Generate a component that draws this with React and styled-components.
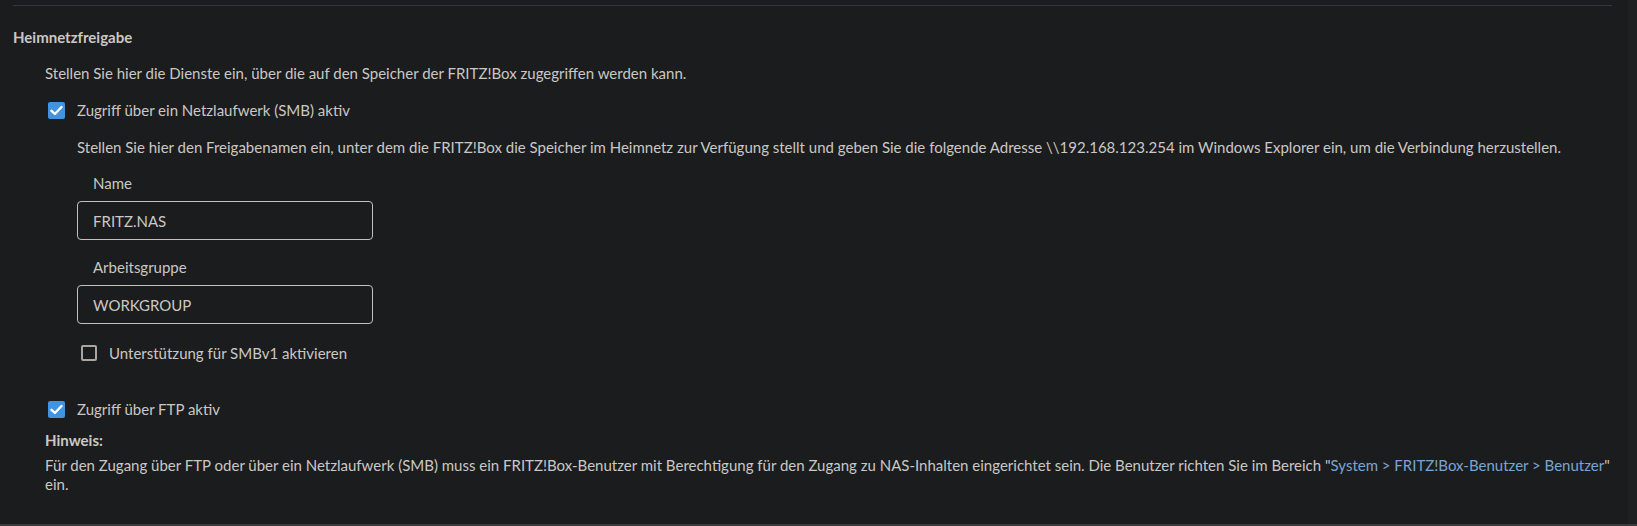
import React from "react";
import styled, { createGlobalStyle } from "styled-components";

const GlobalStyle = createGlobalStyle`
  html, body { margin: 0; padding: 0; background: #1b1c1e; }
  body {
    font-family: Lato, "Noto Sans", sans-serif;
    font-size: 15px;
    color: #cac8c4;
    -webkit-font-smoothing: antialiased;
  }
  * { box-sizing: border-box; }
`;

const Page = styled.div`
  display: flex;
  height: 526px;
  border-bottom: 2px solid #3a3b3d;
  background: #1b1c1e;
  overflow: hidden;
`;

const Main = styled.main`
  flex: 1;
  padding: 0 16px 0 13px;
`;

const Scrollbar = styled.div`
  width: 9px;
  background: #1f2022;
`;

const Rule = styled.hr`
  margin: 5px 0 0;
  border: 0;
  height: 1px;
  background: #35363a;
`;

const Heading = styled.h2`
  margin: 21px 0 0;
  font-size: 15px;
  line-height: 20px;
  font-weight: 700;
  color: #cac8c4;
`;

const Section = styled.div`
  padding-left: 32px;
`;

const Text = styled.p`
  margin: ${(p) => p.$mt || 0}px 0 0;
  line-height: 20px;
`;

const CheckRow = styled.label`
  display: flex;
  align-items: center;
  height: 20px;
  margin-top: ${(p) => p.$mt || 0}px;
  padding-left: ${(p) => p.$pl || 3}px;
  gap: ${(p) => p.$gap || 12}px;
  line-height: 20px;
  cursor: pointer;
`;

const Box = styled.span`
  flex: none;
  display: inline-flex;
  align-items: center;
  justify-content: center;
  width: ${(p) => (p.$checked ? 17 : 16)}px;
  height: ${(p) => (p.$checked ? 17 : 16)}px;
  border-radius: 2px;
  background: ${(p) => (p.$checked ? "#4293e0" : "transparent")};
  border: ${(p) => (p.$checked ? "none" : "2px solid #a9a6a1")};
`;

const SubSection = styled.div`
  padding-left: 32px;
`;

const FieldLabel = styled.div`
  margin-top: ${(p) => p.$mt || 0}px;
  padding-left: 16px;
  line-height: 20px;
`;

const Input = styled.input`
  display: block;
  margin-top: 8px;
  width: 296px;
  height: 39px;
  padding: 0 15px;
  border: 1px solid #c4c0ba;
  border-radius: 4px;
  background: #1b1c1e;
  color: #cac8c4;
  font-family: Lato, "Noto Sans", sans-serif;
  font-size: 15px;
  outline: none;
`;

const NoteTitle = styled.div`
  margin-top: 11px;
  font-weight: 700;
  font-size: 15px;
  line-height: 20px;
`;

const NoteText = styled.p`
  margin: 6px 0 0;
  line-height: 19px;
`;

const Line = styled.span`
  display: block;
`;

const Link = styled.a`
  color: #7ba4d2;
  text-decoration: none;
`;

function Checkbox({ checked, label, mt, pl, gap }) {
  return (
    <CheckRow $mt={mt} $pl={pl} $gap={gap}>
      <Box $checked={checked}>
        {checked && (
          <svg width="13" height="11" viewBox="0 0 13 11" fill="none">
            <path d="M1.5 5.8 L4.9 9 L11.5 2" stroke="#fff" strokeWidth="2.4" strokeLinecap="round" strokeLinejoin="round" />
          </svg>
        )}
      </Box>
      <span>{label}</span>
    </CheckRow>
  );
}

export default function App() {
  return (
    <>
      <GlobalStyle />
      <Page>
        <Main>
          <Rule />
          <Heading>Heimnetzfreigabe</Heading>
          <Section>
            <Text $mt={16}>
              Stellen Sie hier die Dienste ein, über die auf den Speicher der FRITZ!Box zugegriffen werden kann.
            </Text>
            <Checkbox checked mt={17} label="Zugriff über ein Netzlaufwerk (SMB) aktiv" />
            <SubSection>
              <Text $mt={17}>
                Stellen Sie hier den Freigabenamen ein, unter dem die FRITZ!Box die Speicher im Heimnetz zur Verfügung stellt und geben Sie die folgende Adresse \\192.168.123.254 im Windows Explorer ein, um die Verbindung herzustellen.
              </Text>
              <FieldLabel $mt={16}>Name</FieldLabel>
              <Input defaultValue="FRITZ.NAS" />
              <FieldLabel $mt={17}>Arbeitsgruppe</FieldLabel>
              <Input defaultValue="WORKGROUP" />
              <Checkbox mt={19} pl={4} gap={12} label="Unterstützung für SMBv1 aktivieren" />
            </SubSection>
            <Checkbox checked mt={36} label="Zugriff über FTP aktiv" />
            <NoteTitle>Hinweis:</NoteTitle>
            <NoteText>
              <Line>
                {'Für den Zugang über FTP oder über ein Netzlaufwerk (SMB) muss ein FRITZ!Box-Benutzer mit Berechtigung für den Zugang zu NAS-Inhalten eingerichtet sein. Die Benutzer richten Sie im Bereich "'}
                <Link href="#">System &gt; FRITZ!Box-Benutzer &gt; Benutzer</Link>
                {'"'}
              </Line>
              <Line>ein.</Line>
            </NoteText>
          </Section>
        </Main>
        <Scrollbar />
      </Page>
    </>
  );
}
